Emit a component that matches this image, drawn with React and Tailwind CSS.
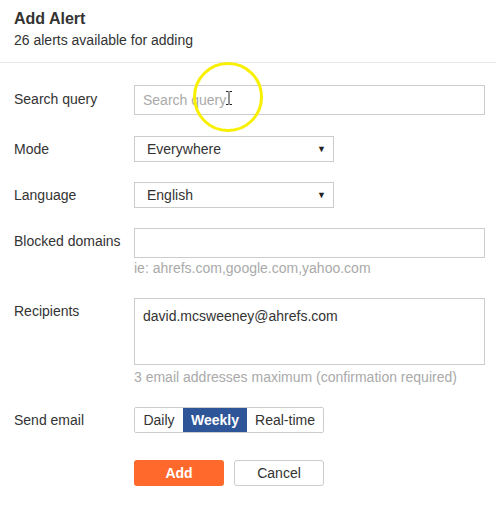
import React, { useState } from 'react';

const Row = ({ label, children, className = '' }) => (
  <div className={`flex ${className}`}>
    <label className="w-[120px] shrink-0 text-[14px] text-[#333]">{label}</label>
    <div className="flex-1">{children}</div>
  </div>
);

const Select = ({ value }) => (
  <div className="relative w-[200px] h-[26px] border border-[#ccc] bg-white flex items-center pl-3 text-[14px] text-[#333]">
    {value}
    <span className="absolute right-[7px] top-[8px] text-[9px] leading-none text-[#222]">▼</span>
  </div>
);

export default function App() {
  const [freq, setFreq] = useState('Weekly');

  return (
    <div className="relative w-[496px] h-[524px] bg-white font-['Liberation_Sans',Arial,sans-serif]">
      <div className="px-[14px] pt-[9px] pb-[13px] border-b border-[#e6e6e6]">
        <h1 className="text-[16px] font-bold text-[#333] leading-[20px]">Add Alert</h1>
        <p className="text-[14px] text-[#333] mt-[3px] leading-[17px]">26 alerts available for adding</p>
      </div>

      <div className="px-[14px] pt-[22px]">
        <Row label={<span className="block pt-[4px]">Search query</span>}>
          <input
            placeholder="Search query"
            className="w-[351px] h-[30px] border border-[#ccc] px-2 text-[14px] text-[#333] placeholder-[#aaa] outline-none"
          />
        </Row>

        <Row label={<span className="block pt-[3px]">Mode</span>} className="mt-[21px]">
          <Select value="Everywhere" />
        </Row>

        <Row label={<span className="block pt-[3px]">Language</span>} className="mt-[20px]">
          <Select value="English" />
        </Row>

        <Row label={<span className="block pt-[3px]">Blocked domains</span>} className="mt-[20px]">
          <input className="w-[351px] h-[30px] border border-[#ccc] px-2 text-[14px] outline-none" />
          <p className="text-[14px] text-[#aaa] mt-[2px] leading-[17px]">ie: ahrefs.com,google.com,yahoo.com</p>
        </Row>

        <Row label={<span className="block pt-[3px]">Recipients</span>} className="mt-[21px]">
          <div className="w-[351px] h-[67px] border border-[#ccc] px-2 pt-[9px] text-[14px] text-[#333] leading-[17px]">
            david.mcsweeney@ahrefs.com
          </div>
          <p className="text-[14px] text-[#aaa] mt-[4px] leading-[17px]">3 email addresses maximum (confirmation required)</p>
        </Row>

        <Row label={<span className="block pt-[3px]">Send email</span>} className="mt-[21px]">
          <div className="flex h-[26px] w-fit border border-[#ccc] rounded-[2px] text-[14px]">
            {[
              ['Daily', 'w-[48px]'],
              ['Weekly', 'w-[64px]'],
              ['Real-time', 'w-[76px]'],
            ].map(([f, w]) => (
              <button
                key={f}
                onClick={() => setFreq(f)}
                className={`${w} flex items-center justify-center ${
                  freq === f ? 'bg-[#2e5597] text-white font-bold' : 'text-[#333]'
                }`}
              >
                {f}
              </button>
            ))}
          </div>
        </Row>

        <div className="flex gap-[10px] ml-[120px] mt-[27px]">
          <button className="w-[90px] h-[26px] rounded-[3px] bg-[#ff6a2c] text-white text-[14px] font-bold">Add</button>
          <button className="w-[90px] h-[26px] rounded-[3px] border border-[#ccc] bg-white text-[#333] text-[14px]">Cancel</button>
        </div>
      </div>

      {/* cursor highlight overlay */}
      <div className="absolute left-[193px] top-[62px] w-[70px] h-[70px] rounded-full border-[3px] border-[#f8f000] pointer-events-none" />
      <svg className="absolute left-[225px] top-[91px] pointer-events-none" width="8" height="14" viewBox="0 0 8 14">
        <path d="M1 0.5h2.5M4.5 0.5H7M4 1v12M1 13.5h2.5M4.5 13.5H7" stroke="#222" strokeWidth="1" fill="none" />
      </svg>
    </div>
  );
}
